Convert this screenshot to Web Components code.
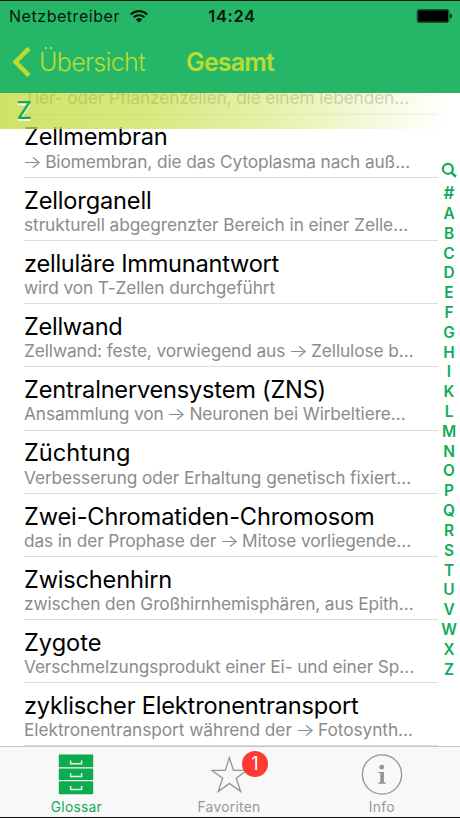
<!DOCTYPE html>
<html lang="de">
<head>
<meta charset="utf-8">
<title>Glossar</title>
<style>
html,body{margin:0;height:100%;background:#fff;font-family:Inter,"Liberation Sans",sans-serif}
</style>
</head>
<body>
<glossary-app></glossary-app>
<script>
// A single line of text spread over a given width by letter-spacing.
class FitText extends HTMLElement {
  constructor() {
    super();
    this.attachShadow({mode: 'open'}).innerHTML =
      '<style>:host{display:inline-block;white-space:pre}span{display:inline-block}::slotted(i){display:inline-block;font-style:normal;font-weight:300;transform:scaleX(1.18)}</style><span><slot></slot></span>';
  }
  connectedCallback() {
    const w = +this.getAttribute('w');
    const s = this.shadowRoot.querySelector('span');
    const n = this.textContent.length;
    s.style.letterSpacing = '';
    const natural = s.getBoundingClientRect().width;
    if (w && natural) s.style.letterSpacing = ((w - natural) / n).toFixed(3) + 'px';
  }
}

class StatusBar extends HTMLElement {
  constructor() {
    super();
    this.attachShadow({mode: 'open'}).innerHTML = `<style>
:host{display:grid;grid-template-columns:1fr auto 1fr;align-items:center;height:30px;box-sizing:border-box;padding:0 7px 0 9px;color:#06170d;font-size:16px;line-height:26px}
.l{display:flex;align-items:center;gap:10px}.t{font-weight:600;font-size:16.5px;padding-left:2px}.r{justify-self:end;display:flex}
svg{display:block}
</style><div class="l"><fit-text w="111">Netzbetreiber</fit-text>
<svg width="18" height="13" viewBox="0 0 18 13" fill="none" stroke="#06170d" stroke-width="2.1"><path d="M.8 4.4a12 12 0 0 1 16.4 0M3.6 7.3a8 8 0 0 1 10.8 0"/><path d="M9 12.6 5.9 9.5a4.5 4.5 0 0 1 6.2 0z" fill="#06170d" stroke="none"/></svg></div>
<div class="t"><fit-text w="47.5">14:24</fit-text></div>
<div class="r"><svg width="37" height="14" viewBox="0 0 37 14"><rect x="1" y=".5" width="32" height="13" rx="2" fill="none" stroke="#0b5a30"/><rect x="1.8" y="1.3" width="30.4" height="11.4" rx="1" fill="#000"/><path d="M34.2 4.6q1.7.6 1.7 2.4t-1.7 2.4z" fill="#000"/></svg></div>`;
  }
}

class NavBar extends HTMLElement {
  constructor() {
    super();
    this.attachShadow({mode: 'open'}).innerHTML = `<style>
:host{display:flex;align-items:center;height:62px;box-sizing:border-box;padding:0 12px;color:#b9dc31;font-size:25px;line-height:30px}
svg{display:block;margin-right:8px}.back{font-weight:350}.title{font-weight:600;margin-left:41px}
</style><svg width="19" height="30" viewBox="0 0 19 30" fill="none" stroke="#b9dc31" stroke-width="4.6"><path d="M17 1.4 3.6 15 17 28.6"/></svg>
<fit-text class="back" w="106"></fit-text><fit-text class="title" w="88"></fit-text>`;
  }
  connectedCallback() {
    for (const f of this.shadowRoot.querySelectorAll('fit-text')) {
      f.textContent = this.getAttribute(f.className === 'title' ? 'heading' : 'back');
      f.connectedCallback();
    }
  }
}

class GlossaryRow extends HTMLElement {
  constructor() {
    super();
    this.attachShadow({mode: 'open'}).innerHTML = `<style>
:host{display:block;height:63.2px;box-sizing:border-box;margin-left:24px;margin-right:22px;border-bottom:1px solid #dedee0;padding-top:7.8px}
.t{font-size:23.6px;line-height:29px;height:29.2px;color:#000}
.d{font-size:17.3px;line-height:20px;height:20px;color:#8b8b8d}
</style><div class="t"><slot name="term"></slot></div><div class="d"><slot></slot></div>`;
  }
}

class SectionHeader extends HTMLElement {
  constructor() {
    super();
    this.attachShadow({mode: 'open'}).innerHTML = `<style>
:host{display:block;position:absolute;left:0;top:0;right:0;height:36px;box-sizing:border-box;padding-left:16.5px;background:linear-gradient(90deg,rgba(197,219,68,.8) 0,rgba(204,225,85,.76) 30%,rgba(222,236,140,.72) 60%,rgba(255,255,255,.6) 97%);color:#10ac50;font-weight:550;font-size:24px;line-height:36px;text-shadow:0 1.5px 0 rgba(255,255,255,.9)}
</style><slot></slot>`;
  }
}

class AlphaIndex extends HTMLElement {
  constructor() {
    super();
    const letters = [...'ABCDEFGHIKLMNOPQRSTUVWXZ'].map(c => `<b>${c}</b>`).join('');
    this.attachShadow({mode: 'open'}).innerHTML = `<style>
:host{display:flex;flex-direction:column;align-items:center;position:absolute;right:0;top:68.5px;width:22px;color:#10ac58;font-size:15.4px}
b{font-weight:580;height:19.82px;line-height:19.82px}b.h{height:22.4px;line-height:22.4px;margin-top:4px;font-size:17px}
svg{display:block}
</style><svg width="16" height="16" viewBox="0 0 16 16" fill="none" stroke="#10ac58" stroke-width="2.2"><circle cx="6.9" cy="6.8" r="5"/><path d="M10.6 10.6l4.3 4.2" stroke-width="2.7"/></svg><b class="h">#</b>${letters}`;
  }
}

class TabItem extends HTMLElement {
  constructor() {
    super();
    this.attachShadow({mode: 'open'}).innerHTML = `<style>
:host{display:flex;flex-direction:column;align-items:center;width:152.7px;color:#999;font-size:13.8px;line-height:16px}
:host([active]){color:#12ab57}
.i{height:45px;padding-top:6.5px;box-sizing:border-box;margin-bottom:7px;position:relative}
::slotted(svg){display:block}
.badge{position:absolute;left:32px;top:4px;width:26px;height:26px;border-radius:50%;background:#ff3933;color:#fff;font-size:18px;line-height:26px;text-align:center}
.badge:empty{display:none}
</style><div class="i"><slot name="icon"></slot><span class="badge"></span></div><slot></slot>`;
  }
  connectedCallback() {
    this.shadowRoot.querySelector('.badge').textContent = this.getAttribute('badge') || '';
  }
}

class TabBar extends HTMLElement {
  constructor() {
    super();
    this.attachShadow({mode: 'open'}).innerHTML = `<style>
:host{display:flex;height:72px;box-sizing:border-box;border-top:1px solid #c4c6c4;border-bottom:1px solid #111;background:#f8f8f8}
</style><slot></slot>`;
  }
}

// Term, term width, description, description width.
const ROWS = [
  ['', 0, 'Tier- oder Pflanzenzellen, die einem lebenden…', 385],
  ['Zellmembran', 143.5, '→ Biomembran, die das Cytoplasma nach auß…', 386],
  ['Zellorganell', 127.5, 'strukturell abgegrenzter Bereich in einer Zelle…', 384],
  ['zelluläre Immunantwort', 255, 'wird von T-Zellen durchgeführt', 251],
  ['Zellwand', 98.5, 'Zellwand: feste, vorwiegend aus → Zellulose b…', 389.5],
  ['Zentralnervensystem (ZNS)', 302, 'Ansammlung von → Neuronen bei Wirbeltiere…', 381.5],
  ['Züchtung', 106.5, 'Verbesserung oder Erhaltung genetisch fixiert…', 387],
  ['Zwei-Chromatiden-Chromosom', 350.5, 'das in der Prophase der → Mitose vorliegende…', 387],
  ['Zwischenhirn', 148, 'zwischen den Großhirnhemisphären, aus Epith…', 389.5],
  ['Zygote', 77.5, 'Verschmelzungsprodukt einer Ei- und einer Sp…', 390],
  ['zyklischer Elektronentransport', 334.5, 'Elektronentransport während der → Fotosynth…', 389]
];

class GlossaryApp extends HTMLElement {
  constructor() {
    super();
    const rows = ROWS.map(([t, tw, d, dw]) =>
      `<glossary-row>${t && `<fit-text slot="term" w="${tw}">${t}</fit-text>`}<fit-text w="${dw}">${d.replace('→', '<i>→</i>')}</fit-text></glossary-row>`).join('');
    this.attachShadow({mode: 'open'}).innerHTML = `<style>
:host{display:flex;flex-direction:column;width:460px;height:818px;overflow:hidden;background:#fff}
header{height:93px;box-sizing:border-box;background:#26b667;border-top:1px solid #0d1a12}
main{flex:1;min-height:0;position:relative;overflow:hidden}
.rows{margin-top:-41.6px}
</style>
<header><status-bar></status-bar><nav-bar back="Übersicht" heading="Gesamt"></nav-bar></header>
<main><div class="rows">${rows}</div><section-header>Z</section-header><alpha-index></alpha-index></main>
<tab-bar>
<tab-item active><svg slot="icon" width="36" height="41" viewBox="0 0 36 41"><path fill="#0bab4e" d="M1.5.5h33q.7 0 .7.7v12H.8v-12q0-.7.7-.7zM.8 14.4h34.4v11.7H.8zM.8 27.3h34.4v12.2q0 .7-.7.7h-33q-.7 0-.7-.7z"/><path fill="none" stroke="#e2f7e9" stroke-width="1.5" d="M12.6 6.4v3.3h11V6.4M12.6 19.2v3.3h11v-3.3M12.6 32.1v3.3h11v-3.3"/></svg><fit-text w="51">Glossar</fit-text></tab-item>
<tab-item badge="1"><svg slot="icon" width="38" height="38" viewBox="0 0 38 38" style="margin-top:2px" fill="none" stroke="#949494" stroke-width="1.3"><path d="M19.4 1.6l4 12.8h13.2L26.2 22.2l4.5 13.4-11.3-8.2-11.1 8.2 4.3-13.4L2 14.4h13.3z"/></svg><fit-text w="63">Favoriten</fit-text></tab-item>
<tab-item><svg slot="icon" width="42" height="42" viewBox="0 0 42 42"><circle cx="21" cy="20.5" r="19.6" fill="none" stroke="#949494" stroke-width="1.3"/><circle cx="20.8" cy="13.2" r="2.4" fill="#949494"/><path fill="#949494" d="M17.4 18h5.5v10.3l1.9.3v1.1h-7.4v-1.1l1.9-.3v-8.9l-1.9-.3z"/></svg><fit-text w="26">Info</fit-text></tab-item>
</tab-bar>`;
  }
}

customElements.define('fit-text', FitText);
customElements.define('status-bar', StatusBar);
customElements.define('nav-bar', NavBar);
customElements.define('glossary-row', GlossaryRow);
customElements.define('section-header', SectionHeader);
customElements.define('alpha-index', AlphaIndex);
customElements.define('tab-item', TabItem);
customElements.define('tab-bar', TabBar);
customElements.define('glossary-app', GlossaryApp);
// Tab labels inherit their size only once the tab items exist, so fit them again.
document.querySelector('glossary-app').shadowRoot.querySelectorAll('fit-text').forEach(f => f.connectedCallback());
</script>
</body>
</html>
